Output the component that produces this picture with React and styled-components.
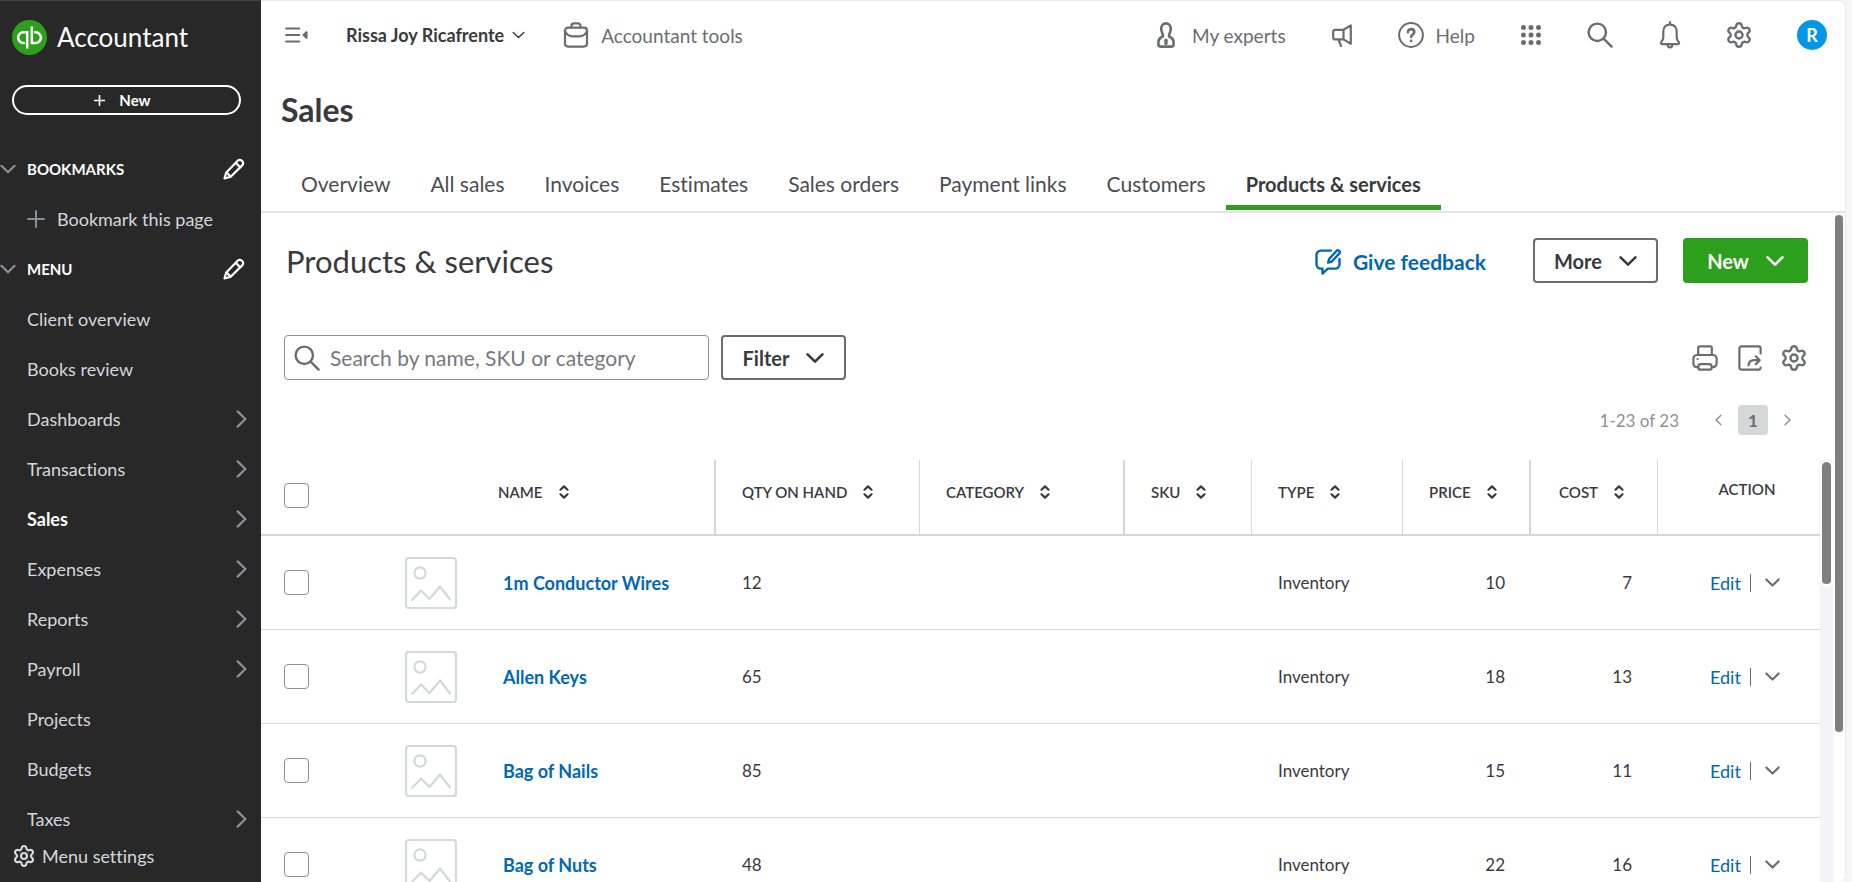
import React from "react";
import styled, { createGlobalStyle, css } from "styled-components";

const c = {
  ink: "#393a3d",
  grey: "#6b6c72",
  soft: "#8d9096",
  line: "#d4d7dc",
  blue: "#0068b3",
  green: "#2ca01c",
  dark: "#282828",
};

const GlobalStyle = createGlobalStyle`
  * { box-sizing: border-box; }
  body {
    margin: 0;
    background: #f6f6f7;
    color: ${c.ink};
    font-family: Lato, "Open Sans", sans-serif;
    font-size: 17px;
    font-variant-ligatures: none;
  }
  button, input { font: inherit; color: inherit; font-variant-ligatures: none; }
  button { background: none; border: 0; padding: 0; cursor: pointer; }
  a { color: inherit; text-decoration: none; }
  h1, h2, ul { margin: 0; padding: 0; }
  ul { list-style: none; }
  svg { display: block; flex: none; }
`;

/* ---------- icons ---------- */

const Icon = ({ w, h = w, box, sw = 2, children }) => (
  <svg
    width={w}
    height={h}
    viewBox={box || `0 0 ${w} ${h}`}
    fill="none"
    stroke="currentColor"
    strokeWidth={sw}
    strokeLinecap="round"
    strokeLinejoin="round"
    aria-hidden="true"
  >
    {children}
  </svg>
);

const Gear = ({ w = 24, h = 26, sw = 2 }) => (
  <Icon w={w} h={h} box="2 1 20 22" sw={sw}>
    <path d="M9.671 4.136a2.34 2.34 0 0 1 4.659 0 2.34 2.34 0 0 0 3.319 1.915 2.34 2.34 0 0 1 2.33 4.033 2.34 2.34 0 0 0 0 3.831 2.34 2.34 0 0 1-2.33 4.033 2.34 2.34 0 0 0-3.319 1.915 2.34 2.34 0 0 1-4.659 0 2.34 2.34 0 0 0-3.32-1.915 2.34 2.34 0 0 1-2.33-4.033 2.34 2.34 0 0 0 0-3.831A2.34 2.34 0 0 1 6.35 6.051a2.34 2.34 0 0 0 3.319-1.915" />
    <circle cx="12" cy="12" r="3" />
  </Icon>
);

const Search = () => (
  <Icon w={26} sw={2.4}>
    <circle cx="10.3" cy="10.3" r="8.7" />
    <path d="M16.6 16.6 24.6 24.6" />
  </Icon>
);

const ChevronDown = ({ w = 18, h = 10, sw = 2.6 }) => (
  <Icon w={w} h={h} box="0 0 18 10" sw={sw}>
    <path d="M1.6 1.4 9 8.6 16.4 1.4" />
  </Icon>
);

const ChevronRight = ({ w = 11, h = 18 }) => (
  <Icon w={w} h={h} box="0 0 11 18" sw={2.2}>
    <path d="M1.6 1.4 9.4 9 1.6 16.6" />
  </Icon>
);

const ChevronLeft = ({ w, h }) => (
  <Icon w={w} h={h} box="0 0 11 18" sw={2.2}>
    <path d="M9.4 1.4 1.6 9 9.4 16.6" />
  </Icon>
);

const Pencil = () => (
  <Icon w={22} sw={2.2}>
    <path d="M1.5 20.5 3.3 14.4 14.9 2.6a2.6 2.6 0 0 1 3.7 0l.8.8a2.6 2.6 0 0 1 0 3.7L7.7 18.8Z" />
    <path d="M12.8 4.9 17.2 9.2M3.6 14.6 7.6 18.5" />
  </Icon>
);

const Plus = ({ w = 18, sw = 2 }) => (
  <Icon w={w} box="0 0 18 18" sw={sw}>
    <path d="M9 1v16M1 9h16" />
  </Icon>
);

const Logo = () => (
  <svg width="35" height="35" viewBox="0 0 35 35" fill="none" stroke="#fff" strokeWidth="2.5" aria-hidden="true">
    <circle cx="17.5" cy="17.5" r="17.5" fill={c.green} stroke="none" />
    <path d="M15.2 28.6V12.2H11.5a5.4 5.4 0 0 0 0 10.8h1.4" />
    <path d="M19.8 6.4V23h3.7a5.4 5.4 0 0 0 0-10.8h-1.4" />
  </svg>
);

const Collapse = () => (
  <Icon w={23} h={16} sw={2.2}>
    <path d="M1.2 1.5h13M1.2 8h13M1.2 14.5h13" />
    <path d="M21.5 5.2v5.6L18.6 8Z" fill="currentColor" />
  </Icon>
);

const Briefcase = () => (
  <Icon w={26} sw={2.2}>
    <rect x="2" y="5.6" width="22" height="19" rx="3" />
    <path d="M8.4 5.4V4a2.6 2.6 0 0 1 2.6-2.6h4A2.6 2.6 0 0 1 17.6 4v1.4M2 9.6c1.8 3.6 4.6 4.8 8 4.8h6c3.4 0 6.2-1.2 8-4.8" />
  </Icon>
);

const Expert = () => (
  <Icon w={18} h={26} sw={2.6}>
    <path d="M5.8 14.4c.6-1 .3-1.900-.4-3.100C4.500 9.800 4.200 8.300 4.200 6.600a4.800 5.200 0 0 1 9.600 0c0 1.700-.3 3.200-1.200 4.700-.7 1.200-1 2.100-.4 3.100" />
    <path d="M5.800 14.400 3.600 15.900c-1.500 1-2.200 2.500-2.200 4.600v2.100c0 1.300.7 2 2 2h11.200c1.300 0 2-.7 2-2v-2.100c0-2.100-.7-3.600-2.200-4.600l-2.200-1.500" />
    <path d="M9 18.200v3.200" strokeWidth="3.400" />
  </Icon>
);

const Megaphone = () => (
  <Icon w={20} h={23} sw={2.2}>
    <path d="M11.5 5.8 18.8 1.4v18.4l-7.300-4.400ZM11.500 5.800H3.200A2 2 0 0 0 1.200 7.800v5.600a2 2 0 0 0 2 2h8.300M6.600 15.600 9 22" />
  </Icon>
);

const Help = () => (
  <Icon w={26} sw={2}>
    <circle cx="13" cy="13" r="11.9" />
    <path strokeWidth="2.6" d="M9.900 10.200c0-1.900 1.300-3.100 3.200-3.100s3.200 1.200 3.200 2.900c0 2.300-3.200 2.500-3.200 5M13.100 18.900v.1" />
  </Icon>
);

const Apps = () => (
  <svg width="20" height="20" viewBox="0 0 20 20" fill="currentColor" aria-hidden="true">
    {[2.5, 10, 17.5].map((y) => [2.5, 10, 17.5].map((x) => <circle key={`${x}-${y}`} cx={x} cy={y} r="2.5" />))}
  </svg>
);

const Bell = () => (
  <Icon w={22} h={28} sw={2.2}>
    <path d="M11 1.200v2.200M11 3.600c-4.300 0-6.700 2.900-6.700 7v6c0 1.900-1 3-1.900 4.200-.9 1.200-.5 2.300.8 2.300h15.600c1.300 0 1.700-1.100.8-2.300-.9-1.200-1.900-2.300-1.900-4.200v-6c0-4.100-2.400-7-6.700-7ZM8.700 23.800a2.300 2.600 0 0 0 4.600 0" />
  </Icon>
);

const Feedback = () => (
  <Icon w={26} sw={2.4}>
    <path d="M16 1.600H5.800A4.300 4.300 0 0 0 1.500 5.900v9.400a4.300 4.300 0 0 0 4.300 4.300h1.700v5l5.300-5h7.400a4.300 4.300 0 0 0 4.300-4.300v-5.300" />
    <path d="M13.200 13.600l.9-3.600 7.300-8a1.900 1.900 0 0 1 2.800 2.600l-7.400 7.900Z" />
  </Icon>
);

const Printer = () => (
  <Icon w={26} sw={2.2}>
    <path d="M6.200 10V2.600c0-.8.5-1.300 1.300-1.300h11c.8 0 1.300.5 1.300 1.300V10M6.200 22.200H5a3.600 3.600 0 0 1-3.600-3.600v-5A3.600 3.600 0 0 1 5 10h16a3.600 3.600 0 0 1 3.600 3.600v5a3.600 3.600 0 0 1-3.600 3.600h-1.200M9 19.200h8c1.900 0 2.800.9 2.800 2.700 0 1.900-.9 2.800-2.800 2.800H9c-1.900 0-2.800-.9-2.800-2.800 0-1.800.9-2.700 2.800-2.700ZM5.600 14v.1" />
  </Icon>
);

const Export = () => (
  <Icon w={24} h={26} sw={2.2}>
    <path d="M22.600 8.500V3.400a2 2 0 0 0-2-2H3.400a2 2 0 0 0-2 2v19.200a2 2 0 0 0 2 2h17.200a2 2 0 0 0 2-2M10.500 20.500c.3-3.600 2.200-5.300 5.500-5.300h5.500M17.800 11.300l3.900 3.900-3.900 3.900" />
  </Icon>
);

const Sort = () => (
  <Icon w={10} h={14} sw={2.2}>
    <path d="M1.500 4.700 5 1.400 8.500 4.700M1.500 9.300 5 12.600 8.500 9.300" />
  </Icon>
);

const Photo = () => (
  <Icon w={52} sw={2.2}>
    <rect x="1" y="1" width="50" height="50" rx="3" />
    <circle cx="15" cy="16" r="5.6" />
    <path d="M7 43 16 33.500 24.500 42 35 29.500 45 42.500" />
  </Icon>
);

/* ---------- shell ---------- */

const Shell = styled.div`
  display: flex;
  height: 100vh;
  padding-right: 6px;
`;

const Sidebar = styled.aside`
  display: flex;
  flex-direction: column;
  flex: none;
  width: 261px;
  background: ${c.dark};
  border-top: 1px solid #444;
  color: ${c.line};
`;

const Brand = styled.div`
  display: flex;
  align-items: center;
  gap: 10px;
  height: 72px;
  padding: 0 12px;
  color: #fff;
  font-size: 26px;
`;

const CreateButton = styled.button`
  display: flex;
  align-items: center;
  justify-content: center;
  gap: 14px;
  flex: none;
  height: 30px;
  margin: 12px 20px 29px 12px;
  padding-right: 8px;
  border: 2px solid #fff;
  border-radius: 15px;
  color: #fff;
  font-size: 15px;
  font-weight: 700;
`;

const Nav = styled.nav`
  flex: 1;
  min-height: 0;
  overflow: hidden;
`;

const NavHeading = styled.div`
  display: flex;
  align-items: center;
  height: 50px;
  padding-right: 16px;
  color: #fff;
  font-size: 15px;
`;

const NavToggle = styled.button`
  display: flex;
  align-items: center;
  gap: 11px;
  flex: 1;
  font-weight: 700;
  text-align: left;
  svg { color: ${c.soft}; }
`;

const NavLink = styled.a`
  display: flex;
  align-items: center;
  gap: 12px;
  height: 50px;
  padding: 0 14px 0 27px;
  font-size: 18px;
  svg { color: ${c.soft}; }
  ${(p) => p.$active && css`color: #fff; font-weight: 700;`}
`;

const NavText = styled.span`
  flex: 1;
`;

const MenuSettings = styled.button`
  display: flex;
  align-items: center;
  gap: 8px;
  height: 24px;
  margin: 0 0 14px 14px;
  font-size: 18px;
`;

const Main = styled.main`
  display: flex;
  flex-direction: column;
  flex: 1;
  min-width: 0;
  background: #fff;
  border: solid #ebebed;
  border-width: 1px 1px 0 0;
  border-radius: 0 8px 8px 0;
  overflow: hidden;
`;

/* ---------- top bar ---------- */

const TopBar = styled.header`
  display: flex;
  align-items: center;
  justify-content: space-between;
  flex: none;
  height: 68px;
  padding: 0 18px 0 24px;
  color: ${c.grey};
`;

const TopGroup = styled.div`
  display: flex;
  align-items: center;
  gap: ${(p) => p.$gap}px;
`;

const TopButton = styled.button`
  display: flex;
  align-items: center;
  gap: ${(p) => p.$gap || 12}px;
  font-size: 19px;
  white-space: nowrap;
`;

const CompanyButton = styled(TopButton)`
  color: ${c.ink};
  font-size: 18px;
  font-weight: 700;
`;

const Avatar = styled.button`
  width: 30px;
  height: 30px;
  border-radius: 50%;
  background: #0097e6;
  color: #fff;
  font-size: 18px;
  font-weight: 700;
`;

const PageTitle = styled.h1`
  flex: none;
  height: 82px;
  padding: 23px 20px 0;
  font-size: 32px;
  line-height: 36px;
  font-weight: 700;
`;

const Tabs = styled.nav`
  display: flex;
  flex: none;
  height: 62px;
  padding: 0 20px;
  border-bottom: 2px solid #e3e5e9;
`;

const Tab = styled.a`
  height: 59px;
  padding: 21px 20px 0;
  border-bottom: 5px solid transparent;
  border-radius: 2px 2px 0 0;
  color: #4c4d51;
  font-size: 21px;
  line-height: 24px;
  white-space: nowrap;
  ${(p) => p.$active && css`border-color: ${c.green}; color: ${c.ink}; font-size: 20px; font-weight: 700;`}
`;

/* ---------- content ---------- */

const Scroller = styled.div`
  display: flex;
  flex: 1;
  min-height: 0;
`;

const Content = styled.section`
  display: flex;
  flex-direction: column;
  flex: 1;
  min-width: 0;
`;

const Rail = styled.div`
  flex: none;
  width: ${(p) => p.$width}px;
  background: ${(p) => p.$track};
`;

const Thumb = styled.div`
  height: ${(p) => p.$height};
  border: solid #fff;
  border-width: 2px 2px 3px;
  border-radius: 8px;
  background: #7f7f80;
`;

const Heading = styled.div`
  display: flex;
  align-items: center;
  flex: none;
  gap: 25px;
  padding: 25px 25px 0;
`;

const HeadingText = styled.h2`
  flex: 1;
  font-size: 31px;
  line-height: 36px;
  font-weight: 400;
`;

const FeedbackLink = styled.a`
  display: flex;
  align-items: center;
  gap: 12px;
  margin: 3px 22px 0 0;
  color: ${c.blue};
  font-size: 21px;
  line-height: 24px;
  font-weight: 700;
`;

const Button = styled.button`
  display: flex;
  align-items: center;
  justify-content: center;
  gap: 17px;
  width: 125px;
  height: 45px;
  border: 2px solid ${(p) => (p.$primary ? c.green : c.grey)};
  border-radius: 4px;
  background: ${(p) => (p.$primary ? c.green : "#fff")};
  color: ${(p) => (p.$primary ? "#fff" : c.ink)};
  font-size: 20px;
  line-height: 24px;
  font-weight: 700;
`;

const Toolbar = styled.div`
  display: flex;
  align-items: center;
  flex: none;
  gap: 12px;
  padding: 52px 27px 0 23px;
`;

const SearchBox = styled.label`
  display: flex;
  align-items: center;
  gap: 10px;
  width: 425px;
  height: 45px;
  padding: 0 9px;
  border: 1px solid ${c.soft};
  border-radius: 4px;
  color: ${c.grey};
`;

const SearchInput = styled.input`
  flex: 1;
  min-width: 0;
  padding: 0;
  border: 0;
  outline: 0;
  background: none;
  font-size: 21px;
  &::placeholder { color: #77787e; opacity: 1; }
`;

const Tools = styled.div`
  display: flex;
  gap: 20px;
  margin-left: auto;
  color: ${c.grey};
`;

const Pager = styled.div`
  display: flex;
  align-items: center;
  justify-content: flex-end;
  flex: none;
  gap: 16px;
  margin: 25px 0;
  padding-right: 42px;
  color: ${c.soft};
  font-size: 17px;
`;

const PagerCount = styled.span`
  margin-right: 20px;
`;

const CurrentPage = styled.button`
  width: 30px;
  height: 30px;
  border-radius: 4px;
  background: #d6d8d8;
  color: ${c.grey};
  font-size: 17px;
  font-weight: 700;
`;

/* ---------- table ---------- */

const TableArea = styled.div`
  display: flex;
  flex: 1;
  min-height: 0;
  overflow: hidden;
`;

const TableWrap = styled.div`
  flex: 1;
  min-width: 0;
  overflow: hidden;
`;

const Table = styled.table`
  width: 100%;
  table-layout: fixed;
  border-collapse: separate;
  border-spacing: 0;
`;

const Col = styled.col`
  width: ${(p) => (p.$width ? `${p.$width}px` : "auto")};
`;

const Th = styled.th`
  height: 76px;
  padding: 0 ${(p) => (p.$numeric ? 33 : 0)}px 10px ${(p) => p.$left ?? 26}px;
  border-bottom: 2px solid ${c.line};
  border-right: ${(p) => p.$rule || 0}px solid ${c.line};
  font-size: 15px;
  font-weight: 600;
  text-align: left;
`;

const CheckTh = styled(Th)`
  padding: 0 0 4px 23px;
`;

const ActionTh = styled(Th)`
  padding: 0 0 16px 16px;
  text-align: center;
`;

const SortButton = styled.button`
  display: flex;
  align-items: center;
  gap: 16px;
  margin-left: ${(p) => (p.$numeric ? "auto" : 0)};
  white-space: nowrap;
`;

const Td = styled.td`
  height: 94px;
  padding: 0 26px 0 ${(p) => p.$left ?? 26}px;
  border-bottom: 1px solid ${c.line};
  font-size: 17px;
  text-align: ${(p) => (p.$numeric ? "right" : "left")};
`;

const PhotoTd = styled(Td)`
  color: ${c.line};
`;

const Checkbox = styled.input`
  display: block;
  appearance: none;
  width: 25px;
  height: 25px;
  margin: 0;
  border: 1px solid ${c.soft};
  border-radius: 4px;
  background: #fff;
`;

const ItemLink = styled.a`
  color: ${c.blue};
  font-size: 18px;
  font-weight: 700;
  white-space: nowrap;
`;

const Actions = styled.div`
  display: flex;
  align-items: center;
  color: ${c.grey};
`;

const EditLink = styled.a`
  padding-right: 9px;
  color: ${c.blue};
  font-size: 18px;
`;

const Divider = styled.span`
  width: 1px;
  height: 18px;
  margin-right: 14px;
  background: ${c.grey};
`;

/* ---------- data ---------- */

const menu = [
  { label: "Client overview" },
  { label: "Books review" },
  { label: "Dashboards", sub: true },
  { label: "Transactions", sub: true },
  { label: "Sales", sub: true, active: true },
  { label: "Expenses", sub: true },
  { label: "Reports", sub: true },
  { label: "Payroll", sub: true },
  { label: "Projects" },
  { label: "Budgets" },
  { label: "Taxes", sub: true },
];

const tabs = [
  "Overview",
  "All sales",
  "Invoices",
  "Estimates",
  "Sales orders",
  "Payment links",
  "Customers",
  "Products & services",
];

const columns = [
  { label: "NAME", left: 17, rule: 2 },
  { label: "QTY ON HAND", width: 204, rule: 1 },
  { label: "CATEGORY", width: 205, rule: 2 },
  { label: "SKU", width: 127, rule: 1 },
  { label: "TYPE", width: 151, rule: 1 },
  { label: "PRICE", width: 128, rule: 2, numeric: true },
  { label: "COST", width: 127, rule: 1, numeric: true },
];

const items = [
  { name: "1m Conductor Wires", qty: 12, type: "Inventory", price: 10, cost: 7 },
  { name: "Allen Keys", qty: 65, type: "Inventory", price: 18, cost: 13 },
  { name: "Bag of Nails", qty: 85, type: "Inventory", price: 15, cost: 11 },
  { name: "Bag of Nuts", qty: 48, type: "Inventory", price: 22, cost: 16 },
];

const NavSection = ({ label }) => (
  <NavHeading>
    <NavToggle type="button">
      <ChevronDown w={16} h={10} sw={2.4} />
      {label}
    </NavToggle>
    <button type="button" aria-label={`Edit ${label.toLowerCase()}`}>
      <Pencil />
    </button>
  </NavHeading>
);

const SideNav = () => (
  <Sidebar>
    <Brand>
      <Logo />
      Accountant
    </Brand>
    <CreateButton type="button">
      <Plus w={11} sw={2.6} />
      New
    </CreateButton>
    <Nav aria-label="Main menu">
      <NavSection label="BOOKMARKS" />
      <NavLink href="#bookmark">
        <Plus />
        Bookmark this page
      </NavLink>
      <NavSection label="MENU" />
      <ul>
        {menu.map((m) => (
          <li key={m.label}>
            <NavLink href={`#${m.label}`} $active={m.active}>
              <NavText>{m.label}</NavText>
              {m.sub && <ChevronRight />}
            </NavLink>
          </li>
        ))}
      </ul>
    </Nav>
    <MenuSettings type="button">
      <Gear w={20} h={22} sw={2.2} />
      Menu settings
    </MenuSettings>
  </Sidebar>
);

const Top = () => (
  <TopBar>
    <TopGroup $gap={38}>
      <TopButton type="button" aria-label="Collapse menu">
        <Collapse />
      </TopButton>
      <CompanyButton type="button" $gap={8}>
        Rissa Joy Ricafrente
        <ChevronDown w={13} h={8} sw={2} />
      </CompanyButton>
      <TopButton type="button">
        <Briefcase />
        Accountant tools
      </TopButton>
    </TopGroup>
    <TopGroup $gap={46}>
      <TopButton type="button" $gap={17}>
        <Expert />
        My experts
      </TopButton>
      <TopButton type="button" aria-label="Announcements">
        <Megaphone />
      </TopButton>
      <TopButton type="button">
        <Help />
        Help
      </TopButton>
      <TopButton type="button" aria-label="Apps">
        <Apps />
      </TopButton>
      <TopButton type="button" aria-label="Search">
        <Search />
      </TopButton>
      <TopButton type="button" aria-label="Notifications">
        <Bell />
      </TopButton>
      <TopButton type="button" aria-label="Settings">
        <Gear />
      </TopButton>
      <Avatar type="button">R</Avatar>
    </TopGroup>
  </TopBar>
);

const ItemsTable = () => (
  <Table>
    <colgroup>
      <Col $width={120} />
      <Col $width={100} />
      {columns.map((col) => (
        <Col key={col.label} $width={col.width} />
      ))}
      <Col $width={162} />
    </colgroup>
    <thead>
      <tr>
        <CheckTh>
          <Checkbox type="checkbox" aria-label="Select all" />
        </CheckTh>
        <Th aria-label="Image" />
        {columns.map((col) => (
          <Th key={col.label} scope="col" $left={col.left} $rule={col.rule} $numeric={col.numeric}>
            <SortButton type="button" $numeric={col.numeric}>
              {col.label}
              <Sort />
            </SortButton>
          </Th>
        ))}
        <ActionTh scope="col">ACTION</ActionTh>
      </tr>
    </thead>
    <tbody>
      {items.map((item) => (
        <tr key={item.name}>
          <Td $left={23}>
            <Checkbox type="checkbox" aria-label={`Select ${item.name}`} />
          </Td>
          <PhotoTd $left={24}>
            <Photo />
          </PhotoTd>
          <Td $left={22}>
            <ItemLink href="#item">{item.name}</ItemLink>
          </Td>
          <Td>{item.qty}</Td>
          <Td />
          <Td />
          <Td>{item.type}</Td>
          <Td $numeric>{item.price}</Td>
          <Td $numeric>{item.cost}</Td>
          <Td $left={52}>
            <Actions>
              <EditLink href="#edit">Edit</EditLink>
              <Divider />
              <button type="button" aria-label={`More actions for ${item.name}`}>
                <ChevronDown w={15} h={9} sw={2.6} />
              </button>
            </Actions>
          </Td>
        </tr>
      ))}
    </tbody>
  </Table>
);

export default function App() {
  return (
    <>
      <GlobalStyle />
      <Shell>
        <SideNav />
        <Main>
          <Top />
          <PageTitle>Sales</PageTitle>
          <Tabs aria-label="Sales sections">
            {tabs.map((t) => (
              <Tab key={t} href={`#${t}`} $active={t === "Products & services"}>
                {t}
              </Tab>
            ))}
          </Tabs>
          <Scroller>
            <Content>
              <Heading>
                <HeadingText>Products &amp; services</HeadingText>
                <FeedbackLink href="#feedback">
                  <Feedback />
                  Give feedback
                </FeedbackLink>
                <Button type="button">
                  More
                  <ChevronDown />
                </Button>
                <Button type="button" $primary>
                  New
                  <ChevronDown />
                </Button>
              </Heading>
              <Toolbar>
                <SearchBox>
                  <Search />
                  <SearchInput type="text" aria-label="Search" placeholder="Search by name, SKU or category" />
                </SearchBox>
                <Button type="button">
                  Filter
                  <ChevronDown />
                </Button>
                <Tools>
                  <button type="button" aria-label="Print">
                    <Printer />
                  </button>
                  <button type="button" aria-label="Export">
                    <Export />
                  </button>
                  <button type="button" aria-label="Table settings">
                    <Gear />
                  </button>
                </Tools>
              </Toolbar>
              <Pager>
                <PagerCount>1-23 of 23</PagerCount>
                <button type="button" aria-label="Previous page">
                  <ChevronLeft w={7} h={12} />
                </button>
                <CurrentPage type="button">1</CurrentPage>
                <button type="button" aria-label="Next page">
                  <ChevronRight w={7} h={12} />
                </button>
              </Pager>
              <TableArea>
                <TableWrap>
                  <ItemsTable />
                </TableWrap>
                <Rail $width={13} $track="#f3f4f9">
                  <Thumb $height="30%" />
                </Rail>
              </TableArea>
            </Content>
            <Rail $width={12} $track="#fff">
              <Thumb $height="78%" />
            </Rail>
          </Scroller>
        </Main>
      </Shell>
    </>
  );
}
